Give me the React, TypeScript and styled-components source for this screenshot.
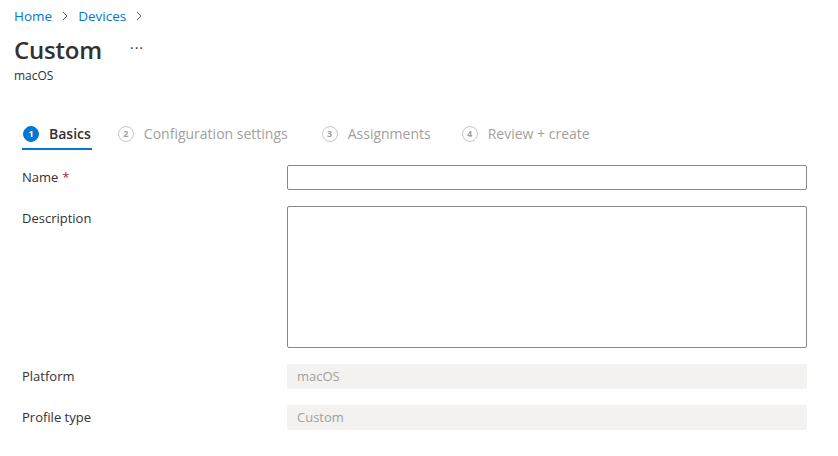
import React from "react";
import styled, { createGlobalStyle } from "styled-components";

const Global = createGlobalStyle`
  html, body { margin: 0; padding: 0; background: #ffffff; }
  body { font-family: "Open Sans", "Noto Sans", Arial, sans-serif; color: #323130; }
  * { box-sizing: border-box; }
`;

const Page = styled.div`
  width: 838px;
  height: 456px;
  padding: 6px 14px 0 14px;
  overflow: hidden;
`;

const Breadcrumb = styled.nav`
  display: flex;
  align-items: center;
  gap: 6px;
  height: 20px;
  font-size: 13.5px;
`;

const Crumb = styled.a`
  color: #0078d4;
  text-decoration: none;
`;

const Chevron = styled.svg`
  width: 10px;
  height: 10px;
  margin: 0 2px;
`;

const TitleRow = styled.div`
  display: flex;
  align-items: center;
  margin-top: 9px;
  height: 30px;
`;

const Title = styled.h1`
  margin: 0;
  font-size: 24px;
  font-weight: 600;
  letter-spacing: -0.2px;
  color: #323130;
  line-height: 30px;
`;

const More = styled.span`
  margin-left: 28px;
  font-size: 14px;
  color: #323130;
  letter-spacing: 1px;
  margin-top: -6px;
`;

const Subtitle = styled.div`
  font-size: 12px;
  color: #323130;
  margin-top: 3px;
  line-height: 16px;
`;

const Tabs = styled.div`
  display: flex;
  align-items: flex-start;
  margin-top: 37px;
  margin-left: 8px;
`;

const Tab = styled.div<{ $active?: boolean; $gap: number }>`
  display: flex;
  align-items: center;
  gap: 10px;
  height: 29px;
  padding: 0 1px 2px 1px;
  margin-right: ${(p) => p.$gap}px;
  border-bottom: 2px solid ${(p) => (p.$active ? "#0078d4" : "transparent")};
  font-size: 14px;
  color: ${(p) => (p.$active ? "#323130" : "#a19f9d")};
  font-weight: ${(p) => (p.$active ? 600 : 400)};
`;

const StepCircle = styled.span<{ $active?: boolean }>`
  width: 16px;
  height: 16px;
  border-radius: 50%;
  display: inline-flex;
  align-items: center;
  justify-content: center;
  font-size: 9px;
  font-weight: 700;
  background: ${(p) => (p.$active ? "#0078d4" : "#ffffff")};
  color: ${(p) => (p.$active ? "#ffffff" : "#a19f9d")};
  border: 1px solid ${(p) => (p.$active ? "#0078d4" : "#c8c6c4")};
`;

const Form = styled.div`
  display: grid;
  grid-template-columns: 265px 520px;
  row-gap: 16px;
  margin-top: 15px;
  margin-left: 8px;
`;

const Label = styled.div`
  font-size: 13px;
  line-height: 25px;
  color: #323130;
`;

const Req = styled.span`
  color: #a4262c;
  margin-left: 4px;
`;

const Input = styled.input`
  height: 25px;
  width: 520px;
  border: 1px solid #8a8886;
  border-radius: 2px;
  padding: 0 10px;
  font-family: inherit;
  font-size: 13px;
  outline: none;
`;

const TextArea = styled.textarea`
  height: 142px;
  width: 520px;
  border: 1px solid #8a8886;
  border-radius: 2px;
  resize: none;
  font-family: inherit;
  font-size: 13px;
  outline: none;
  display: block;
`;

const Disabled = styled.div`
  height: 25px;
  width: 520px;
  background: #f3f2f1;
  border-radius: 2px;
  padding: 0 10px;
  font-size: 13px;
  line-height: 25px;
  color: #a19f9d;
`;

const ChevronIcon = () => (
  <Chevron viewBox="0 0 10 10">
    <path d="M3 1 L7 5 L3 9" fill="none" stroke="#605e5c" strokeWidth="1" />
  </Chevron>
);

const steps = [
  { n: 1, label: "Basics", active: true, gap: 25 },
  { n: 2, label: "Configuration settings", gap: 32 },
  { n: 3, label: "Assignments", gap: 29 },
  { n: 4, label: "Review + create", gap: 0 },
];

export default function App() {
  return (
    <Page>
      <Global />
      <Breadcrumb>
        <Crumb>Home</Crumb>
        <ChevronIcon />
        <Crumb>Devices</Crumb>
        <ChevronIcon />
      </Breadcrumb>
      <TitleRow>
        <Title>Custom</Title>
        <More>···</More>
      </TitleRow>
      <Subtitle>macOS</Subtitle>
      <Tabs>
        {steps.map((s) => (
          <Tab key={s.n} $active={s.active} $gap={s.gap}>
            <StepCircle $active={s.active}>{s.n}</StepCircle>
            {s.label}
          </Tab>
        ))}
      </Tabs>
      <Form>
        <Label>
          Name<Req>*</Req>
        </Label>
        <Input />
        <Label>Description</Label>
        <TextArea />
        <Label>Platform</Label>
        <Disabled>macOS</Disabled>
        <Label>Profile type</Label>
        <Disabled>Custom</Disabled>
      </Form>
    </Page>
  );
}
